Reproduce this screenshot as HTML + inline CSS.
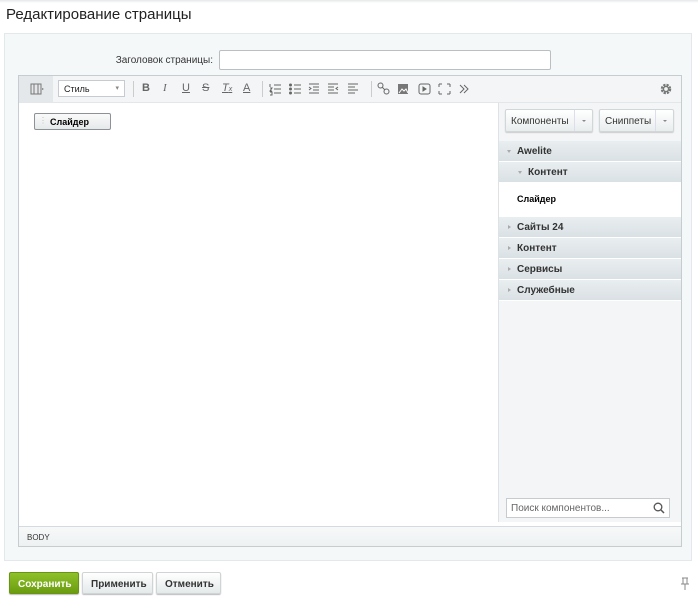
<!DOCTYPE html>
<html><head><meta charset="utf-8"><style>
*{box-sizing:border-box;margin:0;padding:0}
body{width:698px;height:600px;background:#fff;font-family:"Liberation Sans",sans-serif;position:relative;overflow:hidden;color:#000}
.abs{position:absolute}
.h1{left:6px;top:6px;font-size:15px;color:#222}
.topline{left:0;top:0;width:698px;height:3px;background:linear-gradient(#e4e8ea,#fff)}
.panel{left:4px;top:33px;width:688px;height:528px;background:#f5f8f9;border:1px solid #e3e8ea}
.lbl{left:100px;width:113px;text-align:right;top:55px;font-size:10px;color:#333}
.inp{left:219px;top:50px;width:332px;height:20px;border:1px solid #b9bfc3;border-radius:2px;background:#fff}
.ed{left:18px;top:75px;width:664px;height:472px;border:1px solid #c5cdd1;background:#fff}
.tb{left:19px;top:76px;width:662px;height:27px;background:#f3f5f6;border-bottom:1px solid #e3e7e9}
.tbic{position:absolute;top:8px;font-size:11px;color:#666}
.sel{left:58px;top:80px;width:67px;height:17px;border:1px solid #c5cbcf;background:#fff;font-size:9px;padding:3px 5px;color:#222}
.side{left:498px;top:103px;width:183px;height:419px;background:#f3f5f6;border-left:1px solid #dde2e4}
.btn2{position:absolute;top:109px;height:23px;background:linear-gradient(#fff,#e9edee);border:1px solid #d1d6d8;border-radius:2px;font-size:10px;color:#333;padding:6px 5px;box-shadow:0 1px 1px #ccc}
.dd{position:absolute;right:0;top:0;width:18px;height:21px;border-left:1px solid #dde;}
.dd:after{content:"";position:absolute;left:7px;top:10px;border-top:2px solid #888;border-left:2px solid transparent;border-right:2px solid transparent}
.row{position:absolute;left:499px;width:182px;height:21px;background:linear-gradient(#e9eef0,#dae1e4);border-bottom:1px solid #fff;font-size:10px;font-weight:bold;color:#333;padding:5px 0 0 18px}
.arr{position:absolute;left:9px;top:8px;border-left:3px solid #aaa;border-top:2px solid transparent;border-bottom:2px solid transparent}
.arrd{position:absolute;left:8px;top:9px;border-top:3px solid #aaa;border-left:2px solid transparent;border-right:2px solid transparent}
.status{left:19px;top:526px;width:662px;height:20px;background:linear-gradient(#f7f9f9,#eef1f2);border-top:1px solid #d4dadd;font-size:8px;padding:6px 8px;color:#333}
.srch{left:506px;top:498px;width:164px;height:20px;border:1px solid #c5cbcf;background:#fff;font-size:10px;color:#666;padding:4px 4px}
.bb{position:absolute;top:572px;height:22px;border-radius:2px;font-size:10px;font-weight:bold;padding:6px 8px;background:linear-gradient(#fff,#e4e9ea);border:1px solid #cfd4d6;color:#333;box-shadow:0 1px 1px #bbb}
</style></head><body>
<div class="abs topline"></div>
<div class="abs h1">Редактирование страницы</div>
<div class="abs panel"></div>
<div class="abs lbl">Заголовок страницы:</div>
<div class="abs inp"></div>
<div class="abs ed"></div>
<div class="abs tb"></div>
<div class="abs" style="left:19px;top:76px;width:34px;height:26px;background:#e4e8ea"></div>
<svg class="abs" style="left:30px;top:83px" width="16" height="12"><rect x="1" y="1" width="10" height="10" fill="none" stroke="#777"/><line x1="4" y1="1" x2="4" y2="11" stroke="#777"/><line x1="8" y1="1" x2="8" y2="11" stroke="#777"/><path d="M12 5l2 1-2 1z" fill="#777"/></svg>
<div class="abs sel">Стиль<span style="position:absolute;right:5px;top:3px;color:#888;font-size:7px">▾</span></div>
<div class="abs" style="left:133px;top:81px;width:1px;height:16px;background:#ccc"></div>
<span class="tbic" style="left:142px;top:82px;font-weight:bold;position:absolute">B</span>
<span class="tbic" style="left:163px;top:82px;font-style:italic;font-family:'Liberation Serif';position:absolute">I</span>
<span class="tbic" style="left:182px;top:82px;text-decoration:underline;position:absolute">U</span>
<span class="tbic" style="left:202px;top:82px;text-decoration:line-through;position:absolute">S</span>
<span class="tbic" style="left:222px;top:82px;font-style:italic;text-decoration:underline;position:absolute">T<small style="font-size:7px">x</small></span>
<span class="tbic" style="left:243px;top:82px;text-decoration:underline;position:absolute">A</span>
<div class="abs" style="left:262px;top:81px;width:1px;height:16px;background:#ccc"></div>
<svg class="abs" style="left:268px;top:82px" width="100" height="14" stroke="#666" fill="none">
<path d="M6 3h7M6 7h7M6 11h7M2 2v3M2 6h2l-2 3h2M2 10h2v3h-2"/>
<path d="M26 3h7M26 7h7M26 11h7"/><circle cx="22.5" cy="3" r="1" fill="#666"/><circle cx="22.5" cy="7" r="1" fill="#666"/><circle cx="22.5" cy="11" r="1" fill="#666"/>
<path d="M41 2h10M45 5h6M45 8h6M41 11h10M41 5l2 1.5-2 1.5"/>
<path d="M60 2h10M60 5h6M60 8h6M60 11h10M70 5l-2 1.5 2 1.5"/>
<path d="M80 2h10M80 5h7M80 8h10M80 11h7"/>
</svg>
<div class="abs" style="left:371px;top:81px;width:1px;height:16px;background:#ccc"></div>
<svg class="abs" style="left:377px;top:82px" width="95" height="14" stroke="#666" fill="none">
<circle cx="3.5" cy="3.5" r="2.5"/><circle cx="9.5" cy="9.5" r="2.5"/><path d="M5 5l3 3"/>
<rect x="21" y="2" width="10" height="10" fill="#777" stroke="none"/><path d="M22 11l3-4 2 2 2-2 2 4" stroke="#fff"/>
<rect x="42" y="2" width="11" height="10" rx="2"/><path d="M46 5v4l3-2z" fill="#666"/>
<path d="M62 2h3v0M62 2v3M73 2h-3M73 2v3M62 12h3M62 12v-3M73 12h-3M73 12v-3"/>
<path d="M83 3l4 4-4 4M87 3l4 4-4 4"/>
</svg>
<svg class="abs" style="left:659px;top:82px" width="14" height="14"><circle cx="7" cy="7" r="4" fill="none" stroke="#777" stroke-width="2.5" stroke-dasharray="2.2 1"/><circle cx="7" cy="7" r="2.5" fill="none" stroke="#777" stroke-width="1.3"/></svg>
<div class="abs" style="left:34px;top:113px;width:77px;height:17px;border:1px solid #8c9296;border-radius:2px;background:linear-gradient(#fafafa,#e6e9ea);font-size:9px;font-weight:bold;padding:3px 0 0 15px">Слайдер<span style="position:absolute;left:4px;top:2px;color:#bbb;font-weight:normal;font-size:8px">⋮</span></div>
<div class="abs side"></div>
<div class="btn2" style="left:505px;width:88px">Компоненты<span class="dd"></span></div>
<div class="btn2" style="left:599px;width:75px">Сниппеты<span class="dd"></span></div>
<div class="row" style="top:141px"><i class="arrd"></i>Awelite</div>
<div class="row" style="top:162px;padding-left:29px"><i class="arrd" style="left:19px"></i>Контент</div>
<div class="abs" style="left:499px;top:183px;width:182px;height:34px;background:#fff;font-size:9px;font-weight:bold;padding:11px 0 0 18px">Слайдер</div>
<div class="row" style="top:217px"><i class="arr"></i>Сайты 24</div>
<div class="row" style="top:238px"><i class="arr"></i>Контент</div>
<div class="row" style="top:259px"><i class="arr"></i>Сервисы</div>
<div class="row" style="top:280px"><i class="arr"></i>Служебные</div>
<div class="abs srch">Поиск компонентов...<svg style="position:absolute;right:4px;top:3px" width="12" height="12"><circle cx="5" cy="5" r="3.8" fill="none" stroke="#555" stroke-width="1.3"/><path d="M8 8l3 3" stroke="#555" stroke-width="1.5"/></svg></div>
<div class="abs status">BODY</div>
<div class="bb" style="left:9px;width:70px;background:linear-gradient(#8fc12a,#6a9c10);border-color:#6a9411;color:#fff">Сохранить</div>
<div class="bb" style="left:82px;width:71px">Применить</div>
<div class="bb" style="left:156px;width:65px">Отменить</div>
<svg class="abs" style="left:681px;top:577px" width="8" height="14" stroke="#888" fill="none"><path d="M1 1h6M2 1v6M6 1v6M0 7h8M4 7v6"/></svg>
</body></html>
